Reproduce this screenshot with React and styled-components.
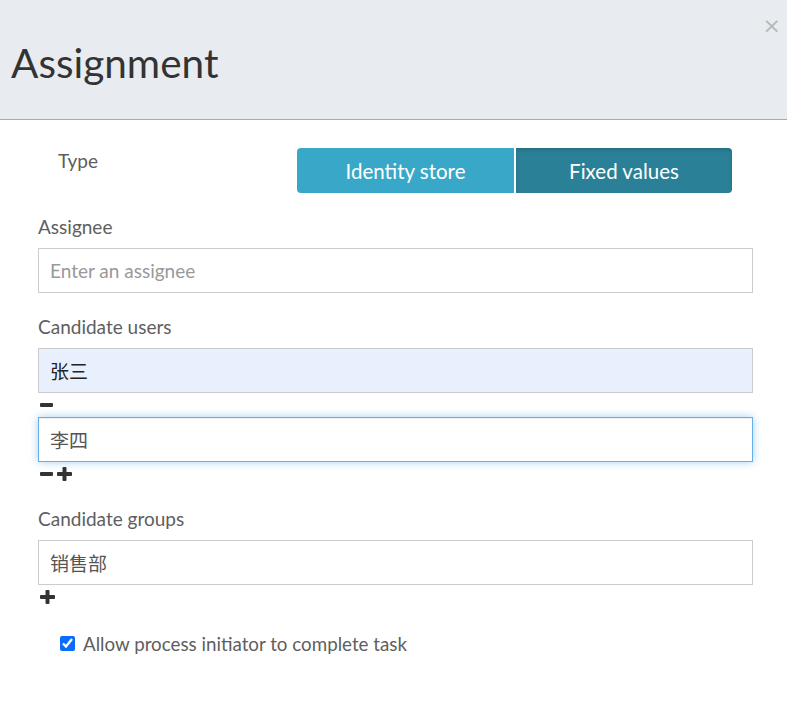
import React from 'react';
import styled, { createGlobalStyle } from 'styled-components';

const GlobalStyle = createGlobalStyle`
  body {
    margin: 0;
    background: #fff;
    font-family: Lato, "Noto Sans CJK SC", sans-serif;
    color: #555;
  }
`;

const Modal = styled.div`
  width: 787px;
  height: 704px;
  background: #fff;
`;

const Header = styled.div`
  position: relative;
  height: 120px;
  background: #e8ecf0;
  border-bottom: 1px solid #a3abb3;
  display: flex;
  align-items: center;
  padding-left: 11px;
  box-sizing: border-box;
`;

const Title = styled.h2`
  margin: 0;
  font-size: 40.5px;
  font-weight: 400;
  color: #333;
  padding-top: 6px;
`;

const Close = styled.button`
  position: absolute;
  top: 15px;
  right: 6px;
  border: none;
  background: transparent;
  color: #b5b8bb;
  font-size: 22px;
  font-family: "DejaVu Sans", sans-serif;
  padding: 0;
  line-height: 1;
`;

const Body = styled.div`
  padding: 28px 34px 0 38px;
`;

const TypeRow = styled.div`
  display: flex;
  align-items: flex-start;
`;

const TypeLabel = styled.div`
  width: 259px;
  box-sizing: border-box;
  padding-left: 20px;
  padding-top: 1px;
  font-size: 19px;
  color: #5e5e5e;
`;

const Toggle = styled.div`
  display: flex;
  gap: 2px;
`;

const ToggleButton = styled.button`
  width: ${p => p.w}px;
  height: 45px;
  border: none;
  border-radius: ${p => (p.first ? '4px 0 0 4px' : '0 4px 4px 0')};
  background: ${p => (p.active ? '#2a8197' : '#39a8c8')};
  color: #fff;
  font-family: Lato, sans-serif;
  font-size: 20.5px;
  box-shadow: ${p => (p.active ? 'inset 0 2px 4px rgba(0,0,0,0.15)' : 'none')};
`;

const Field = styled.div`
  margin-top: ${p => p.mt || 0}px;
`;

const Label = styled.div`
  font-size: 19px;
  color: #5e5e5e;
  line-height: 22px;
  margin-bottom: 10px;
`;

const Input = styled.input`
  display: block;
  width: 715px;
  height: 45px;
  box-sizing: border-box;
  border: 1px solid ${p => (p.focused ? '#66afe9' : '#ccc')};
  background: ${p => (p.filled ? '#e8f0fe' : '#fff')};
  box-shadow: ${p =>
    p.focused ? 'inset 0 1px 1px rgba(0,0,0,.075), 0 0 8px rgba(102,175,233,.6)' : 'none'};
  padding: 0 11px;
  font-family: Lato, "Noto Sans CJK SC", sans-serif;
  font-size: 19px;
  color: ${p => (p.filled ? '#222' : '#555')};
  outline: none;

  &::placeholder {
    color: #999;
  }
`;

const Actions = styled.div`
  display: flex;
  gap: 4px;
  height: 24px;
  align-items: center;
  padding-left: 2px;
  color: #333;
`;

const IconButton = styled.span`
  display: inline-flex;
  cursor: pointer;
`;

const Minus = () => (
  <IconButton>
    <svg width="13" height="14" viewBox="0 0 13 14">
      <rect x="0" y="5" width="13" height="4" rx="1" fill="currentColor" />
    </svg>
  </IconButton>
);

const Plus = () => (
  <IconButton>
    <svg width="15" height="14" viewBox="0 0 15 14">
      <rect x="0" y="5" width="15" height="4" rx="1" fill="currentColor" />
      <rect x="5.5" y="0" width="4" height="14" rx="1" fill="currentColor" />
    </svg>
  </IconButton>
);

const CheckRow = styled.label`
  display: flex;
  align-items: center;
  gap: 8px;
  margin-top: 23px;
  padding-left: 22px;
  font-size: 18.75px;
  color: #5e5e5e;
`;

const Check = styled.input`
  width: 15px;
  height: 15px;
  margin: 0;
  accent-color: #0a6cff;
`;

export default function App() {
  return (
    <Modal>
      <GlobalStyle />
      <Header>
        <Title>Assignment</Title>
        <Close>×</Close>
      </Header>
      <Body>
        <TypeRow>
          <TypeLabel>Type</TypeLabel>
          <Toggle>
            <ToggleButton first w={217}>Identity store</ToggleButton>
            <ToggleButton active w={216}>Fixed values</ToggleButton>
          </Toggle>
        </TypeRow>
        <Field mt={23}>
          <Label>Assignee</Label>
          <Input placeholder="Enter an assignee" />
        </Field>
        <Field mt={23}>
          <Label>Candidate users</Label>
          <Input filled defaultValue="张三" />
          <Actions><Minus /></Actions>
          <Input focused defaultValue="李四" />
          <Actions><Minus /><Plus /></Actions>
        </Field>
        <Field mt={22}>
          <Label>Candidate groups</Label>
          <Input defaultValue="销售部" />
          <Actions><Plus /></Actions>
        </Field>
        <CheckRow>
          <Check type="checkbox" defaultChecked />
          Allow process initiator to complete task
        </CheckRow>
      </Body>
    </Modal>
  );
}
